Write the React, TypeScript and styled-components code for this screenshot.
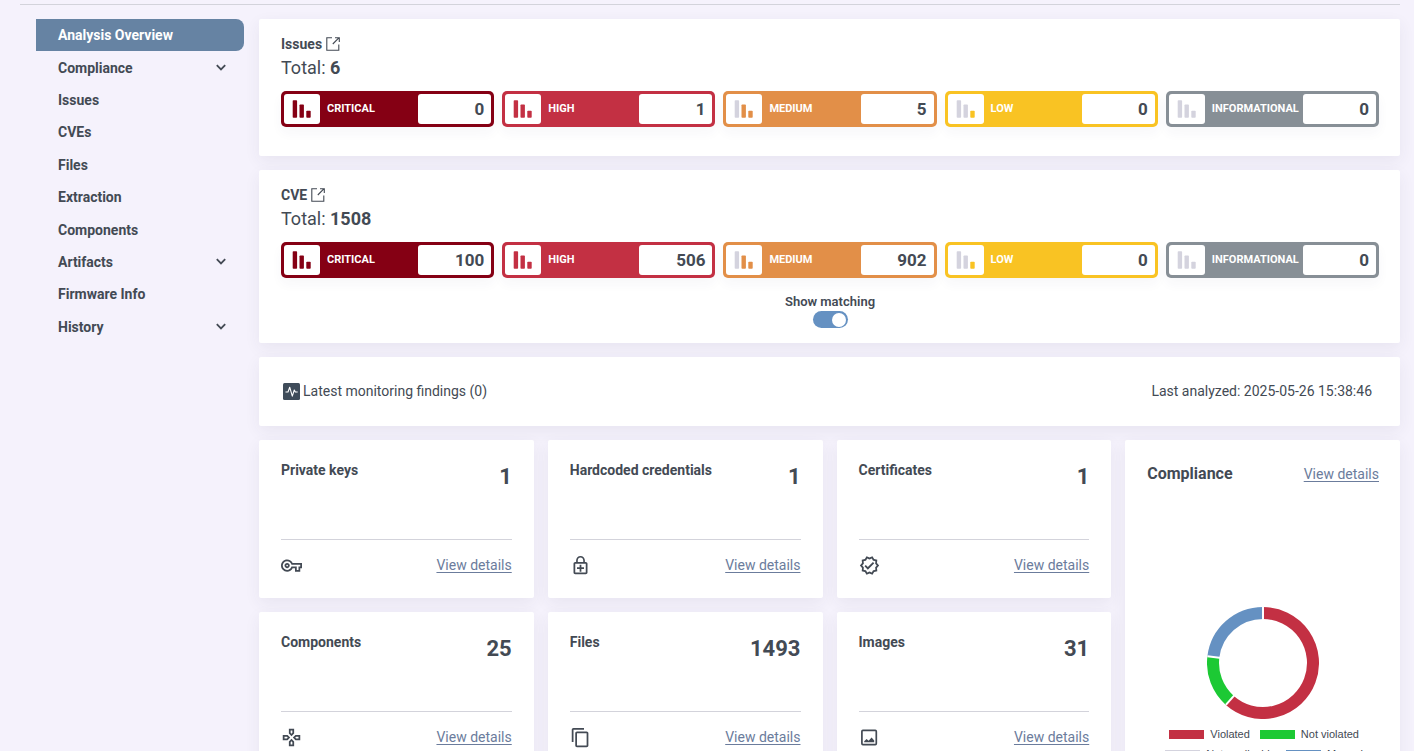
import React, { useState } from "react";
import styled, { createGlobalStyle } from "styled-components";
import {
  MdContentCopy,
  MdOutlineEnhancedEncryption,
  MdOutlineGamepad,
  MdOutlineVerified,
  MdOutlineVpnKey,
} from "react-icons/md";

const color = {
  page: "#f5f2fc",
  text: "#434a54",
  link: "#6b7c9c",
  line: "#d3d3db",
  active: "#6683a3",
  critical: "#850014",
  high: "#c33043",
  medium: "#e28f48",
  low: "#f9c323",
  info: "#878f96",
  muted: "#d4d3de",
  blue: "#6591c2",
  green: "#1cc934",
};

const GlobalStyle = createGlobalStyle`
  *, *::before, *::after { box-sizing: border-box; }
  body {
    margin: 0;
    background: ${color.page};
    color: ${color.text};
    font-family: Roboto, "Liberation Sans", sans-serif;
    font-size: 14px;
    line-height: 18px;
  }
  h2, h3, p, ul { margin: 0; padding: 0; }
`;

const Page = styled.div`
  padding: 4px 14px 14px 20px;
`;

const TopRule = styled.hr`
  margin: 0 0 14px;
  border: 0;
  border-top: 1px solid ${color.line};
`;

const Columns = styled.div`
  display: flex;
  align-items: flex-start;
  gap: 15px;
  padding-left: 16px;
`;

const Sidebar = styled.nav`
  display: grid;
  grid-auto-rows: 1fr;
  flex: 0 0 208px;
  min-height: 324px;
`;

const NavItem = styled.a<{ $active?: boolean }>`
  display: flex;
  align-items: center;
  justify-content: space-between;
  padding: 0 18px 0 22px;
  border-radius: 0 8px 8px 0;
  background: ${(p) => (p.$active ? color.active : "transparent")};
  color: ${(p) => (p.$active ? "#fff" : color.text)};
  font-weight: 700;
  text-decoration: none;
`;

const Main = styled.main`
  display: flex;
  flex: 1;
  flex-direction: column;
  gap: 14px;
  min-width: 0;
`;

const Card = styled.section`
  border-radius: 2px;
  background: #fff;
  box-shadow: 0 5px 16px rgba(60, 50, 80, 0.07);
`;

const SummaryCard = styled(Card)`
  display: flex;
  flex-direction: column;
  min-height: 137px;
  padding: 16px 21px 15px 22px;
`;

const SummaryTitle = styled.h2`
  display: flex;
  align-items: center;
  gap: 4px;
  font-size: 14px;
  font-weight: 700;
  line-height: 18px;
`;

const Total = styled.p`
  margin: 4px 0 12px;
  font-size: 18px;
  line-height: 22px;
`;

const SeverityRow = styled.div`
  display: grid;
  grid-template-columns: repeat(5, 1fr);
  gap: 8px;
`;

const SeverityButton = styled.button<{ $tone: string }>`
  display: flex;
  align-items: stretch;
  height: 36px;
  padding: 3px;
  border: 0;
  border-radius: 5px;
  background: ${(p) => p.$tone};
  box-shadow: 0 6px 12px rgba(60, 50, 90, 0.04);
  color: #fff;
  font-family: inherit;
  cursor: pointer;
`;

const SeverityIcon = styled.span`
  display: flex;
  align-items: center;
  justify-content: center;
  flex: 0 0 36px;
  border-radius: 3px;
  background: #fff;
`;

const SeverityLabel = styled.span`
  flex: 1;
  padding-left: 7px;
  font-size: 11px;
  font-weight: 700;
  line-height: 30px;
  text-align: left;
`;

const SeverityValue = styled.span`
  flex: 0 0 73px;
  padding-right: 7px;
  border-radius: 3px;
  background: #fff;
  color: ${color.text};
  font-size: 17px;
  font-weight: 700;
  line-height: 30px;
  text-align: right;
`;

const MatchingField = styled.label`
  display: flex;
  flex-direction: column;
  align-items: center;
  align-self: center;
  margin-top: 15px;
  font-size: 13px;
  font-weight: 600;
`;

const Switch = styled.input`
  appearance: none;
  display: flex;
  align-items: center;
  justify-content: flex-end;
  width: 35px;
  height: 17px;
  margin: 0;
  padding: 0 2px;
  border-radius: 9px;
  background: ${color.blue};
  cursor: pointer;

  &::before {
    content: "";
    width: 14px;
    height: 14px;
    border-radius: 50%;
    background: #fff;
  }

  &:not(:checked) {
    justify-content: flex-start;
    background: ${color.info};
  }
`;

const MonitoringCard = styled(Card)`
  display: flex;
  align-items: center;
  justify-content: space-between;
  min-height: 69px;
  padding: 0 28px 1px 24px;
  font-size: 14px;
`;

const MonitoringLabel = styled.span`
  display: flex;
  align-items: center;
  gap: 3px;
`;

const TileGrid = styled.div`
  display: grid;
  grid-template-columns: repeat(4, 1fr);
  grid-auto-rows: 158px;
  gap: 14px;
`;

const Tile = styled(Card)`
  display: flex;
  flex-direction: column;
  padding: 0 22px;
`;

const TileHeader = styled.div`
  display: flex;
  justify-content: space-between;
  flex: 1;
  padding-top: 21px;
`;

const TileTitle = styled.h3`
  font-size: 14px;
  font-weight: 700;
  line-height: 18px;
`;

const TileCount = styled.span`
  font-size: 22px;
  font-weight: 700;
  line-height: 32px;
`;

const TileFooter = styled.div`
  display: flex;
  align-items: center;
  justify-content: space-between;
  height: 59px;
  padding-bottom: 8px;
  border-top: 1px solid ${color.line};
`;

const DetailsLink = styled.a`
  color: ${color.link};
  font-size: 14px;
  text-decoration: underline;
  text-underline-offset: 2px;
`;

const ComplianceCard = styled(Card)`
  display: flex;
  flex-direction: column;
  grid-column: 4;
  grid-row: 1 / span 2;
  padding: 23px 21px 0 22px;
`;

const ComplianceHeader = styled.div`
  display: flex;
  align-items: center;
  justify-content: space-between;
  margin-bottom: 122px;
`;

const ComplianceTitle = styled.h2`
  font-size: 16px;
  font-weight: 700;
  line-height: 22px;
`;

const Chart = styled.svg`
  align-self: center;
  flex: none;
`;

const Legend = styled.ul`
  && {
    display: flex;
    flex-wrap: wrap;
    justify-content: center;
    gap: 6px 10px;
    margin-top: 8px;
    padding-left: 2px;
  }
  font-family: "Liberation Sans", Arial, sans-serif;
  font-size: 11px;
  line-height: 14px;
  list-style: none;
`;

const LegendItem = styled.li`
  display: flex;
  align-items: center;
  gap: 6px;
`;

const Swatch = styled.span<{ $tone: string }>`
  width: 35px;
  height: 9px;
  background: ${(p) => p.$tone};
`;

const ChevronIcon = () => (
  <svg width="10" height="8" viewBox="0 0 10 8" fill="none" aria-hidden="true">
    <path d="M.8 1.2 5 5.4l4.2-4.2" stroke="currentColor" strokeWidth="1.8" />
  </svg>
);

const ExternalIcon = () => (
  <svg width="14" height="14" viewBox="0 0 14 14" fill="none" stroke={color.text} aria-hidden="true">
    <path d="M6 .8H.8v12.4h12V7.5" strokeWidth="1.1" />
    <path d="M6.8 7 12.6 1.2M9 .8h4.3V5" strokeWidth="1.1" />
  </svg>
);

const BarsIcon = ({ tones }: { tones: string[] }) => (
  <svg width="20" height="18" viewBox="0 0 20 18" aria-hidden="true">
    <rect x="0.7" y="0.3" width="4.4" height="17.4" rx="0.8" fill={tones[0]} />
    <rect x="7.5" y="4.5" width="4.4" height="13.2" rx="0.8" fill={tones[1]} />
    <rect x="14.3" y="10.7" width="4.4" height="7" rx="0.8" fill={tones[2]} />
  </svg>
);

const PulseIcon = () => (
  <svg width="17" height="17" viewBox="0 0 17 17" aria-hidden="true">
    <rect width="17" height="17" rx="1.5" fill="#3f4c5a" />
    <path d="M2.5 9H5l1.7-4.8 2.6 9 2-6.2 1 2h2.4" fill="none" stroke="#fff" strokeWidth="1.1" strokeLinejoin="round" />
  </svg>
);

const PictureIcon = () => (
  <svg width="21" height="21" viewBox="0 0 21 21" aria-hidden="true">
    <rect x="2.9" y="3.4" width="14.4" height="14.2" rx="1" fill="none" stroke="currentColor" strokeWidth="1.7" />
    <path d="M5.2 15.2v-.9l2.4-2.2 2 1.6 3-3.2 2.6 3v1.7z" fill="currentColor" />
  </svg>
);

const arc = (from: number, to: number) => {
  const point = (turn: number) => {
    const a = turn * 2 * Math.PI;
    return `${56 + 50 * Math.sin(a)} ${56 - 50 * Math.cos(a)}`;
  };
  return `M${point(from)}A50 50 0 ${to - from > 0.5 ? 1 : 0} 1 ${point(to)}`;
};

const slices = [
  { tone: color.high, from: 0, to: 8 / 13 },
  { tone: color.green, from: 8 / 13, to: 10 / 13 },
  { tone: color.blue, from: 10 / 13, to: 1 },
];

const Donut = () => (
  <Chart width="112" height="112" viewBox="0 0 112 112" role="img" aria-label="Compliance results">
    {slices.map((s) => (
      <path key={s.tone} d={arc(s.from, s.to)} fill="none" stroke={s.tone} strokeWidth="12" />
    ))}
    {slices.map((s) => (
      <path
        key={s.tone}
        d="M56 0V14"
        stroke="#fff"
        strokeWidth="2"
        transform={`rotate(${s.from * 360} 56 56)`}
      />
    ))}
  </Chart>
);

const navItems = [
  { label: "Analysis Overview", active: true },
  { label: "Compliance", expands: true },
  { label: "Issues" },
  { label: "CVEs" },
  { label: "Files" },
  { label: "Extraction" },
  { label: "Components" },
  { label: "Artifacts", expands: true },
  { label: "Firmware Info" },
  { label: "History", expands: true },
];

const severities = [
  { label: "CRITICAL", tone: color.critical, bars: [color.critical, color.critical, color.critical] },
  { label: "HIGH", tone: color.high, bars: [color.high, color.high, color.high] },
  { label: "MEDIUM", tone: color.medium, bars: [color.muted, color.medium, color.medium] },
  { label: "LOW", tone: color.low, bars: [color.muted, color.muted, color.low] },
  { label: "INFORMATIONAL", tone: color.info, bars: [color.muted, color.muted, color.muted] },
];

const tiles = [
  { title: "Private keys", count: 1, icon: <MdOutlineVpnKey size={21} /> },
  { title: "Hardcoded credentials", count: 1, icon: <MdOutlineEnhancedEncryption size={21} /> },
  { title: "Certificates", count: 1, icon: <MdOutlineVerified size={21} /> },
  { title: "Components", count: 25, icon: <MdOutlineGamepad size={21} /> },
  { title: "Files", count: 1493, icon: <MdContentCopy size={21} /> },
  { title: "Images", count: 31, icon: <PictureIcon /> },
];

const legend = [
  { label: "Violated", tone: color.high },
  { label: "Not violated", tone: color.green },
  { label: "Not applicable", tone: color.muted },
  { label: "Manual", tone: color.blue },
];

type SummaryProps = { title: string; total: number; counts: number[]; children?: React.ReactNode };

const Summary = ({ title, total, counts, children }: SummaryProps) => (
  <SummaryCard>
    <SummaryTitle>
      {title}
      <ExternalIcon />
    </SummaryTitle>
    <Total>
      Total: <strong>{total}</strong>
    </Total>
    <SeverityRow>
      {severities.map((s, i) => (
        <SeverityButton key={s.label} type="button" $tone={s.tone}>
          <SeverityIcon>
            <BarsIcon tones={s.bars} />
          </SeverityIcon>
          <SeverityLabel>{s.label}</SeverityLabel>
          <SeverityValue>{counts[i]}</SeverityValue>
        </SeverityButton>
      ))}
    </SeverityRow>
    {children}
  </SummaryCard>
);

export default function App() {
  const [matching, setMatching] = useState(true);

  return (
    <>
      <GlobalStyle />
      <Page>
        <TopRule />
        <Columns>
          <Sidebar aria-label="Analysis">
            {navItems.map((item) => (
              <NavItem key={item.label} href="#" $active={item.active}>
                {item.label}
                {item.expands && <ChevronIcon />}
              </NavItem>
            ))}
          </Sidebar>
          <Main>
            <Summary title="Issues" total={6} counts={[0, 1, 5, 0, 0]} />
            <Summary title="CVE" total={1508} counts={[100, 506, 902, 0, 0]}>
              <MatchingField>
                Show matching
                <Switch
                  type="checkbox"
                  role="switch"
                  checked={matching}
                  onChange={(e) => setMatching(e.target.checked)}
                />
              </MatchingField>
            </Summary>
            <MonitoringCard>
              <MonitoringLabel>
                <PulseIcon />
                Latest monitoring findings (0)
              </MonitoringLabel>
              <span>Last analyzed: 2025-05-26 15:38:46</span>
            </MonitoringCard>
            <TileGrid>
              {tiles.map((tile) => (
                <Tile key={tile.title}>
                  <TileHeader>
                    <TileTitle>{tile.title}</TileTitle>
                    <TileCount>{tile.count}</TileCount>
                  </TileHeader>
                  <TileFooter>
                    {tile.icon}
                    <DetailsLink href="#">View details</DetailsLink>
                  </TileFooter>
                </Tile>
              ))}
              <ComplianceCard>
                <ComplianceHeader>
                  <ComplianceTitle>Compliance</ComplianceTitle>
                  <DetailsLink href="#">View details</DetailsLink>
                </ComplianceHeader>
                <Donut />
                <Legend>
                  {legend.map((entry) => (
                    <LegendItem key={entry.label}>
                      <Swatch $tone={entry.tone} />
                      {entry.label}
                    </LegendItem>
                  ))}
                </Legend>
              </ComplianceCard>
            </TileGrid>
          </Main>
        </Columns>
      </Page>
    </>
  );
}
